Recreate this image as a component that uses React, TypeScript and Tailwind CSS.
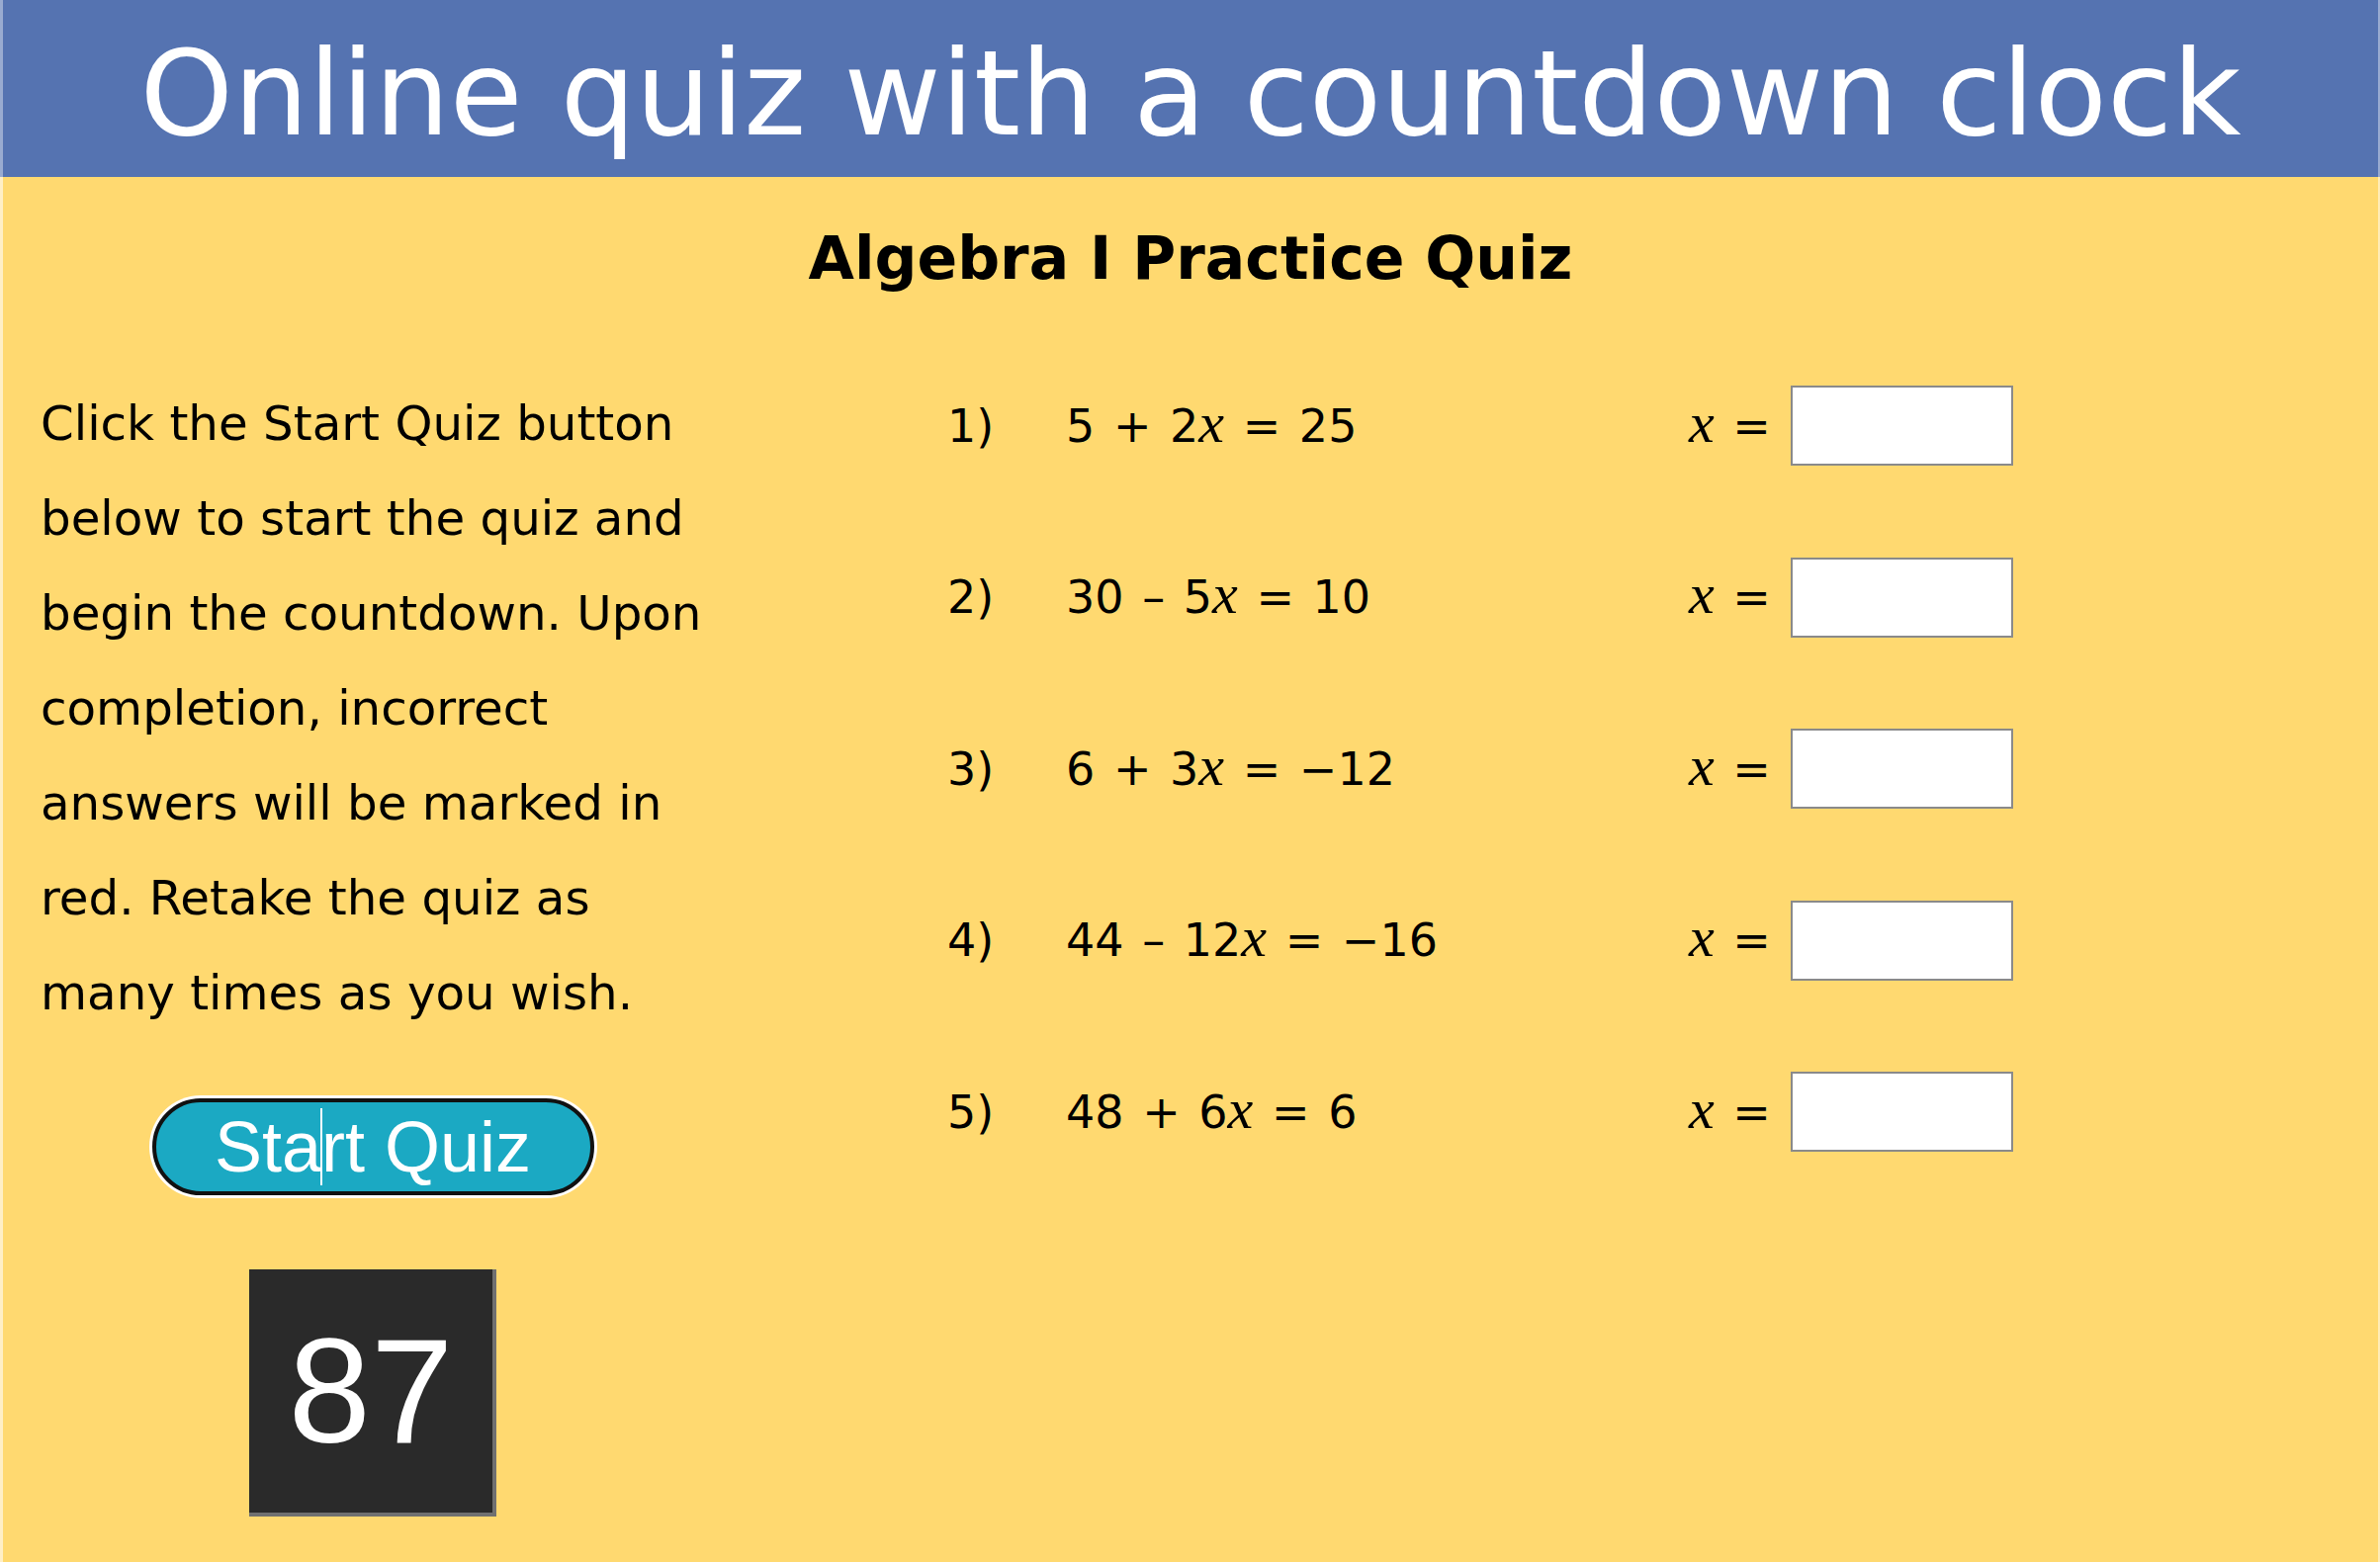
const questions = [
  { n: "1)", pre: "5 + 2", post: " = 25" },
  { n: "2)", pre: "30 – 5", post: " = 10" },
  { n: "3)", pre: "6 + 3", post: " = −12" },
  { n: "4)", pre: "44 – 12", post: " = −16" },
  { n: "5)", pre: "48 + 6", post: " = 6" },
];

function X() {
  return <span className="font-['Liberation_Serif',serif] text-[58px] italic leading-[0]">x</span>;
}

export default function App() {
  return (
    <div className="min-h-[1580px] w-full font-['DejaVu_Sans',sans-serif] text-black">
      <header className="h-[179px] border-l-[3px] border-r-[2px] border-l-white/40 border-r-white/40 bg-[#5573b1] pt-[35px] text-center">
        <h1 className="text-[120px] leading-none text-white">Online quiz with a countdown clock</h1>
      </header>

      <main className="min-h-[1401px] border-l-[3px] border-r-[2px] border-l-white/60 border-r-white/50 bg-[#ffd970]">
        <h2 className="pt-[52px] text-center text-[60px] font-bold leading-none">Algebra I Practice Quiz</h2>

        <div className="mt-[89px] flex">
          <div className="ml-[38px] flex w-[672px] flex-col items-center">
            <p className="w-full text-[48.3px] leading-[96px]">
              Click the Start Quiz button below to start the quiz and begin the countdown. Upon completion, incorrect
              answers will be marked in red. Retake the quiz as many times as you wish.
            </p>

            <div className="mt-[56px] rounded-full bg-white p-[3px]">
              <button className="flex h-[98px] w-[447px] items-center justify-center rounded-full border-[4px] border-[#111] bg-[#1ba9c3] font-['Liberation_Sans',sans-serif] text-[72px] leading-none text-white">
                Sta
                <span className="mx-[-1px] inline-block h-[78px] w-[2px] bg-white" />
                rt Quiz
              </button>
            </div>

            <div className="mt-[72px] flex h-[250px] w-[250px] items-center justify-center border-r-[4px] border-b-[4px] border-[#707070] bg-[#2a2a2a] font-['Liberation_Sans',sans-serif] text-[150px] leading-none text-white">
              87
            </div>
          </div>

          <div className="ml-[245px] flex flex-col gap-[92.5px] pt-[10px]">
            {questions.map((q) => (
              <div key={q.n} className="flex h-[81px] items-center text-[46px] leading-none">
                <span className="w-[120px]">{q.n}</span>
                <span className="w-[630px] [word-spacing:4px]">
                  {q.pre}
                  <X />
                  {q.post}
                </span>
                <span className="mr-[20px] [word-spacing:4px]">
                  <X /> =
                </span>
                <input className="h-[81px] w-[225px] border-2 border-[#8a8a8a] bg-white" />
              </div>
            ))}
          </div>
        </div>
      </main>
    </div>
  );
}
